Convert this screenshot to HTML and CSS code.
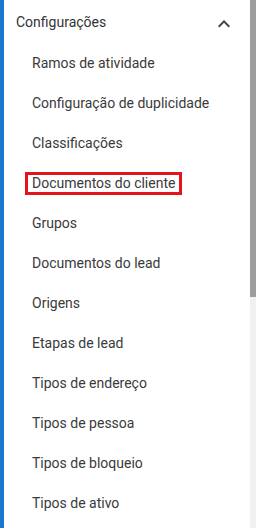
FILE: index.html
```html
<!DOCTYPE html>
<html lang="pt">
<head>
<meta charset="utf-8">
<link rel="stylesheet" href="styles.css">
</head>
<body>
<div class="frame">
  <div class="accent"></div>
  <nav class="panel">
    <div class="header">
      <span class="header-title">Configurações</span>
      <svg class="chevron" viewBox="0 0 24 24" width="24" height="24"><path d="M12 8l-6 6 1.41 1.41L12 10.83l4.59 4.58L18 14z"/></svg>
    </div>
    <ul class="menu">
      <li class="item">Ramos de atividade</li>
      <li class="item">Configuração de duplicidade</li>
      <li class="item">Classificações</li>
      <li class="item"><span class="highlight">Documentos do cliente</span></li>
      <li class="item">Grupos</li>
      <li class="item">Documentos do lead</li>
      <li class="item">Origens</li>
      <li class="item">Etapas de lead</li>
      <li class="item">Tipos de endereço</li>
      <li class="item">Tipos de pessoa</li>
      <li class="item">Tipos de bloqueio</li>
      <li class="item">Tipos de ativo</li>
    </ul>
  </nav>
  <div class="scrollbar"><div class="thumb"></div></div>
</div>
</body>
</html>
```
FILE: styles.css
```css
html, body {
  margin: 0;
  padding: 0;
  background: #ffffff;
}
body {
  font-family: Roboto, "Liberation Sans", sans-serif;
  font-size: 14px;
  color: #333333;
}
.frame {
  display: flex;
  height: 528px;
  overflow: hidden;
}
.accent {
  width: 4px;
  flex: none;
  background: #1976d2;
}
.panel {
  flex: 1;
  background: #ffffff;
  overflow: hidden;
}
.header {
  height: 43px;
  display: flex;
  align-items: center;
  justify-content: space-between;
  padding: 0 14px 0 12px;
}
.header-title {
  color: #333333;
}
.chevron {
  fill: #444444;
  margin-top: 5px;
}
.menu {
  list-style: none;
  margin: 0;
  padding: 0;
}
.item {
  height: 40px;
  display: flex;
  align-items: center;
  padding-left: 28px;
  color: #3a3a3a;
  white-space: nowrap;
}
.highlight {
  display: inline-block;
  line-height: 17px;
  padding: 0 4px;
  margin: 0 -4px;
  box-shadow: 0 0 0 3px #e3141c;
}
.scrollbar {
  width: 6px;
  flex: none;
  background: #f1f1f1;
}
.thumb {
  height: 297px;
  background: #9e9e9e;
}
```
